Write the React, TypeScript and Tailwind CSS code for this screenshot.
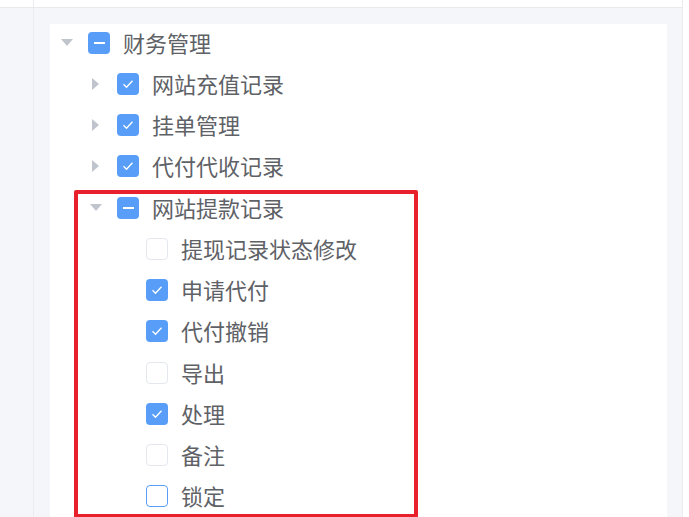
import React from 'react'

type Node = { label: string; level: number; state: 'on' | 'off' | 'half' | 'focus'; caret?: 'open' | 'closed' }

const rows: Node[] = [
  { label: '财务管理', level: 0, state: 'half', caret: 'open' },
  { label: '网站充值记录', level: 1, state: 'on', caret: 'closed' },
  { label: '挂单管理', level: 1, state: 'on', caret: 'closed' },
  { label: '代付代收记录', level: 1, state: 'on', caret: 'closed' },
  { label: '网站提款记录', level: 1, state: 'half', caret: 'open' },
  { label: '提现记录状态修改', level: 2, state: 'off' },
  { label: '申请代付', level: 2, state: 'on' },
  { label: '代付撤销', level: 2, state: 'on' },
  { label: '导出', level: 2, state: 'off' },
  { label: '处理', level: 2, state: 'on' },
  { label: '备注', level: 2, state: 'off' },
  { label: '锁定', level: 2, state: 'focus' },
]

const pad = ['pl-0', 'pl-[29px]', 'pl-[58px]']

function Caret({ kind }: { kind?: 'open' | 'closed' }) {
  return (
    <span className="w-[34px] h-full flex items-center justify-center shrink-0">
      {kind === 'open' && (
        <svg width="12" height="8" viewBox="0 0 12 8"><path d="M0 0h12L6 7z" fill="#c0c4cc" /></svg>
      )}
      {kind === 'closed' && (
        <svg width="8" height="12" viewBox="0 0 8 12"><path d="M0 0v12l7-6z" fill="#c0c4cc" /></svg>
      )}
    </span>
  )
}

function Box({ state }: { state: Node['state'] }) {
  if (state === 'on')
    return (
      <span className="ml-1 w-[22px] h-[22px] rounded-[4px] bg-[#589ef8] flex items-center justify-center shrink-0">
        <svg width="12" height="10" viewBox="0 0 12 10"><path d="M1.5 5.2l3 3 6-6.5" stroke="#fff" strokeWidth="1.3" fill="none" /></svg>
      </span>
    )
  if (state === 'half')
    return (
      <span className="ml-1 w-[22px] h-[22px] rounded-[4px] bg-[#589ef8] flex items-center justify-center shrink-0">
        <span className="w-[11px] h-[2px] bg-white" />
      </span>
    )
  return (
    <span
      className={
        state === 'focus'
          ? 'ml-1 w-[22px] h-[22px] rounded-[4px] border-[1.5px] border-[#589ef8] bg-white shrink-0'
          : 'ml-1 w-[22px] h-[22px] rounded-[4px] border-[1.5px] border-[#e4e7ed] bg-white shrink-0'
      }
    />
  )
}

export default function App() {
  return (
    <div className="w-[689px] h-[517px] overflow-hidden bg-white flex" style={{ fontFamily: '"Noto Sans CJK SC", "Noto Sans", sans-serif' }}>
      <div className="w-[683px] h-full flex flex-col bg-[#f5f6fa] border-r border-[#ececf0]">
        <div className="h-[8px] bg-white border-b border-[#e9e9ec] flex shrink-0">
          <div className="w-[34px] border-r border-[#ececf0]" />
        </div>
        <div className="flex-1 flex">
          <div className="w-[34px] border-r border-[#ececf0] shrink-0" />
          <div className="flex-1 pt-[16px] pl-[16px] pr-[15px]">
            <div className="relative bg-white h-full flow-root">
              <div className="-mt-[2px]">
                {rows.map((r, i) => (
                  <div key={i} className={`h-[41.25px] flex items-center ${pad[r.level]}`}>
                    <Caret kind={r.caret} />
                    <Box state={r.state} />
                    <span className="ml-[13px] pb-[2px] text-[22px] leading-none text-[#5e6166] whitespace-nowrap">{r.label}</span>
                  </div>
                ))}
              </div>
              <div className="absolute left-[24px] top-[166px] w-[344px] h-[328px] border-[4.5px] border-[#e8202b] rounded-[2px] pointer-events-none" />
            </div>
          </div>
        </div>
      </div>
    </div>
  )
}
